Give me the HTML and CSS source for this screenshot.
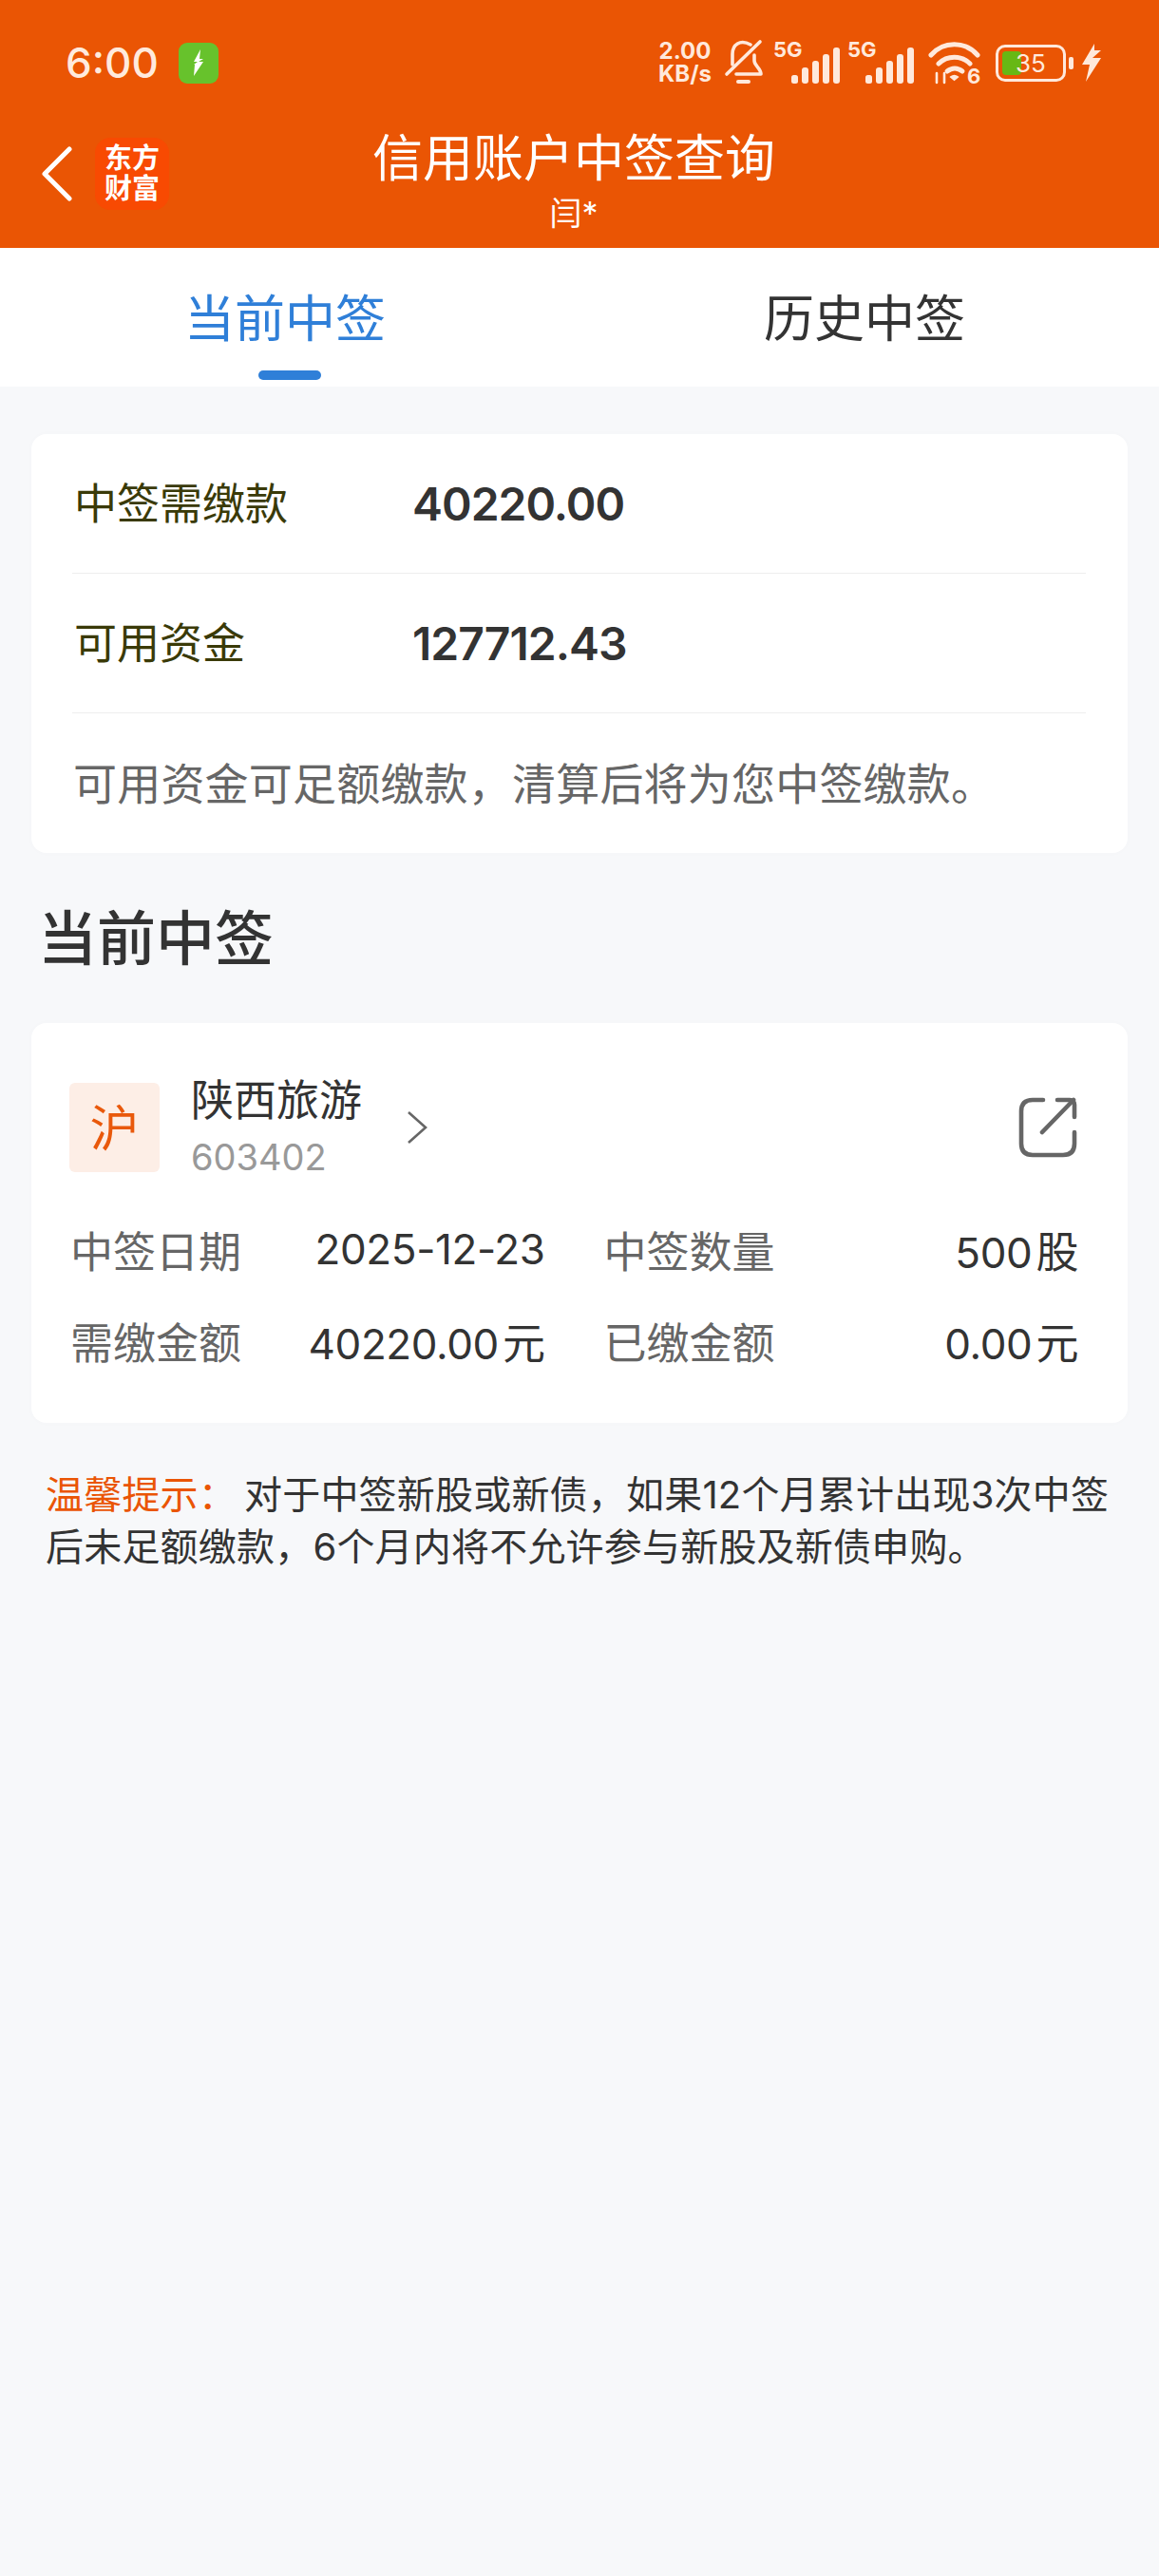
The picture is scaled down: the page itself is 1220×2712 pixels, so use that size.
FILE: index.html
```html
<!DOCTYPE html>
<html lang="zh-CN">
<head>
  <meta charset="UTF-8" />
  <title>信用账户中签查询</title>
  <meta name="viewport" content="width=device-width, initial-scale=1.0" />
  <link rel="stylesheet" href="styles.css">
</head>
<body>
  <header class="top">
    <div class="status-bar">
      <span class="time">6:00</span>
      <span class="charge-badge">
        <svg width="16" height="28" viewBox="0 0 16 28"><path d="M10 0 3 13h4l-4 3 1 0-1 12 10-15H8l5-3H9z" fill="#fff"/></svg>
      </span>
      <span class="status-right">
        <span class="speed"><b>2.00</b><b>KB/s</b></span>
        <svg class="ic-bell" width="42" height="50" viewBox="0 0 42 50" fill="none" stroke="#ffe9dc" stroke-width="3.6" stroke-linecap="round" stroke-linejoin="round">
          <path d="M3 37 38 3"/>
          <path d="M28 6C17 0 9 6 9 16v11"/>
          <path d="M32 17v6c0 5 7 8 7 14H13"/>
          <path d="M15 45h11" stroke-width="4"/>
        </svg>
        <span class="sim">
          <span class="sim-tag">5G</span>
          <svg width="52" height="38" viewBox="0 0 52 38" fill="#ffe9dc">
            <rect x="0" y="29" width="7" height="9" rx="2.5"/>
            <rect x="11" y="21" width="7" height="17" rx="3"/>
            <rect x="22" y="14" width="7" height="24" rx="3"/>
            <rect x="33" y="7" width="7" height="31" rx="3"/>
            <rect x="44" y="0" width="7" height="38" rx="3"/>
          </svg>
        </span>
        <span class="sim">
          <span class="sim-tag">5G</span>
          <svg width="52" height="38" viewBox="0 0 52 38" fill="#ffe9dc">
            <rect x="0" y="29" width="7" height="9" rx="2.5"/>
            <rect x="11" y="21" width="7" height="17" rx="3"/>
            <rect x="22" y="14" width="7" height="24" rx="3"/>
            <rect x="33" y="7" width="7" height="31" rx="3"/>
            <rect x="44" y="0" width="7" height="38" rx="3"/>
          </svg>
        </span>
        <svg class="ic-wifi" width="60" height="54" viewBox="0 0 60 54" fill="none" stroke="#ffe9dc" stroke-width="5" stroke-linecap="round">
          <path d="M3 15C16 0 39 0 52 15"/>
          <path d="M11 24c9-9 24-9 33 0"/>
          <path d="M20 32c5-4 11-4 16 0"/>
          <path d="M24 38c2-1.500 5-1.500 7 0l-3.500 3z" fill="#ffe9dc" stroke-width="2"/>
          <path d="M9 34v10M17 34v10" stroke-width="2.600"/>
          <text x="41" y="45" class="wifi-six">6</text>
        </svg>
        <span class="battery">
          <span class="battery-body">
            <span class="battery-fill"></span>
            <span class="battery-num">35</span>
          </span>
          <span class="battery-nub"></span>
        </span>
        <svg class="ic-bolt" width="22" height="40" viewBox="0 0 22 40"><path d="M14 0 1 22h8L5 40l16-25h-9l9-8h-7z" fill="#ffe9dc"/></svg>
      </span>
    </div>
    <div class="nav">
      <div class="nav-left">
        <svg class="back" width="34" height="58" viewBox="0 0 34 58" fill="none" stroke="#fff" stroke-width="5" stroke-linecap="round" stroke-linejoin="round"><path d="M30 3 4 29l26 26"/></svg>
        <span class="logo"><span>东方</span><span>财富</span></span>
      </div>
      <div class="nav-title">
        <div class="title">信用账户中签查询</div>
        <div class="subtitle">闫*</div>
      </div>
      <div></div>
    </div>
  </header>

  <nav class="tabs">
    <div class="tab active">
      <span class="tab-text">当前中签</span>
      <i class="tab-line"></i>
    </div>
    <div class="tab">
      <span class="tab-text">历史中签</span>
      <i class="tab-line"></i>
    </div>
  </nav>

  <main class="content">
    <section class="card summary">
      <div class="sum-row">
        <span class="sum-label">中签需缴款</span>
        <span class="sum-value">40220.00</span>
      </div>
      <div class="sum-row">
        <span class="sum-label">可用资金</span>
        <span class="sum-value">127712.43</span>
      </div>
      <div class="sum-row sum-tip">可用资金可足额缴款，清算后将为您中签缴款。</div>
    </section>

    <h2 class="section-title">当前中签</h2>

    <section class="card stock">
      <div class="stock-head">
        <span class="market">沪</span>
        <div class="stock-name">
          <div class="name">陕西旅游</div>
          <div class="code">603402</div>
        </div>
        <svg class="chevron" width="22" height="36" viewBox="0 0 22 36" fill="none" stroke="#666" stroke-width="2.600"><path d="M2 2l18 16L2 34"/></svg>
        <svg class="open-link" width="62" height="64" viewBox="0 0 62 64" fill="none" stroke="#666" stroke-width="4.600" stroke-linecap="round" stroke-linejoin="round">
          <path d="M26 3H15C7 3 3 7 3 15v34c0 8 4 12 12 12h32c8 0 12-4 12-12V37"/>
          <path d="M25 37 58 3"/>
          <path d="M41 3h13c3 0 5 2 5 5v13"/>
        </svg>
      </div>
      <div class="stock-grid">
        <div class="pair"><span class="pair-label">中签日期</span><span class="pair-value">2025-12-23</span></div>
        <div class="pair"><span class="pair-label">中签数量</span><span class="pair-value">500<span class="unit">股</span></span></div>
        <div class="pair"><span class="pair-label">需缴金额</span><span class="pair-value">40220.00<span class="unit">元</span></span></div>
        <div class="pair"><span class="pair-label">已缴金额</span><span class="pair-value">0.00<span class="unit">元</span></span></div>
      </div>
    </section>

    <p class="notice"><span class="notice-head">温馨提示：</span>对于中签新股或新债，如果12个月累计出现3次中签后未足额缴款，6个月内将不允许参与新股及新债申购。</p>
  </main>
</body>
</html>
```

FILE: styles.css
```css
* {
  box-sizing: border-box;
}

body {
  margin: 0;
  min-height: 100vh;
  background: #f7f8fa;
  color: #333;
  font-family: Inter, "Noto Sans CJK SC", sans-serif;
}

.top {
  height: 261px;
  background: #ea5504;
  color: #fff;
}

.status-bar {
  display: flex;
  align-items: center;
  height: 132px;
  padding: 0 60px 0 69px;
}

.time {
  font-size: 44px;
  font-weight: 500;
  color: #ffeadd;
}

.charge-badge {
  display: flex;
  align-items: center;
  justify-content: center;
  width: 42px;
  height: 43px;
  margin-left: 21px;
  background: #67c22c;
  border-radius: 9px;
}

.status-right {
  display: flex;
  align-items: center;
  margin-left: auto;
  color: #ffe9dc;
}

.speed {
  display: flex;
  flex-direction: column;
  align-items: center;
  width: 58px;
  font-size: 24px;
  line-height: 24px;
}

.speed b {
  font-weight: 700;
}

.ic-bell {
  margin: 0 3px 0 12px;
}

.sim {
  display: flex;
  align-items: flex-end;
  justify-content: flex-end;
  position: relative;
  width: 70px;
  height: 44px;
  margin-left: 8px;
}

.sim-tag {
  position: absolute;
  left: -1px;
  top: -4px;
  font-size: 22px;
  line-height: 24px;
  font-weight: 700;
}

.ic-wifi {
  margin: 0 -4px 0 14px;
  transform: translateY(4px);
}

.wifi-six {
  font: 700 22px Inter, sans-serif;
  fill: #ffe9dc;
  stroke: none;
}

.battery {
  display: flex;
  align-items: center;
  margin-left: 15px;
}

.battery-body {
  display: flex;
  align-items: center;
  position: relative;
  width: 74px;
  height: 39px;
  padding: 4px;
  border: 3px solid #ffe9dc;
  border-radius: 10px;
}

.battery-fill {
  width: 20px;
  height: 100%;
  background: #67b814;
  border-radius: 4px;
}

.battery-num {
  position: absolute;
  left: 18px;
  top: 2px;
  font-size: 26px;
  line-height: 29px;
  color: #ffe9dc;
}

.battery-nub {
  width: 5px;
  height: 13px;
  margin-left: 3px;
  background: #ffe9dc;
  border-radius: 2px;
}

.ic-bolt {
  margin-left: 8px;
}

.nav {
  display: grid;
  grid-template-columns: 1fr auto 1fr;
  height: 129px;
  padding: 0 55px 0 43px;
}

.nav-left {
  display: flex;
  align-items: center;
  height: 102px;
}

.logo {
  display: flex;
  flex-direction: column;
  align-items: center;
  justify-content: center;
  width: 78px;
  height: 76px;
  margin-left: 23px;
  background: #f84a02;
  border-radius: 16px;
  color: #fff;
  font-size: 29px;
  line-height: 32px;
  font-weight: 700;
}

.nav-title {
  padding-top: 2px;
  text-align: center;
}

.title {
  font-size: 53px;
  line-height: 66px;
}

.subtitle {
  font-size: 34px;
  line-height: 44px;
  margin-top: 3px;
}

.tabs {
  display: flex;
  height: 146px;
  background: #fff;
}

.tab {
  flex: 1;
  display: flex;
  flex-direction: column;
  align-items: center;
  padding-top: 40px;
  font-size: 53px;
  line-height: 66px;
  color: #333;
}

.tab-text {
  margin-top: 2px;
  margin-right: 10px;
}

.tab-line {
  width: 66px;
  height: 10px;
  margin-top: 21px;
  border-radius: 5px;
}

.tab.active {
  color: #2f7fd8;
}

.tab.active .tab-line {
  background: #2f7fd8;
}

.content {
  padding: 50px 33px 0;
}

.card {
  background: #fff;
  border-radius: 16px;
  box-shadow: 0 0 8px rgba(0, 0, 0, 0.015);
}

.summary {
  padding: 0 44px 0 43px;
}

.sum-row {
  display: flex;
  align-items: center;
  height: 147px;
  border-bottom: 1px solid #eeeeee;
}

.sum-row:last-child {
  border-bottom: none;
}

.sum-label {
  width: 358px;
  padding-left: 2px;
  padding-bottom: 6px;
  font-size: 45px;
  color: #3a3a08;
}

.sum-value {
  font-size: 48px;
  font-weight: 600;
  letter-spacing: -1px;
  color: #333;
}

.sum-tip {
  padding-left: 1px;
  padding-bottom: 6px;
  font-size: 46px;
  letter-spacing: 0.2px;
  color: #666;
}

.section-title {
  margin: 56px 0 0 7px;
  font-size: 62px;
  line-height: 70px;
  font-weight: 500;
  color: #333;
}

.stock {
  margin-top: 53px;
  height: 421px;
  padding: 56px 52px 0 40px;
}

.stock-head {
  display: flex;
  align-items: center;
}

.market {
  display: flex;
  align-items: center;
  justify-content: center;
  width: 95px;
  height: 94px;
  padding-bottom: 5px;
  background: #fdeee6;
  border-radius: 6px;
  color: #e9590c;
  font-size: 52px;
}

.stock-name {
  margin-left: 33px;
  padding-top: 2px;
}

.name {
  font-size: 45px;
  line-height: 48px;
  color: #333;
}

.code {
  margin-top: 12px;
  font-size: 38px;
  line-height: 46px;
  color: #999;
}

.chevron {
  margin-left: 47px;
}

.open-link {
  margin-left: auto;
  margin-right: 1px;
}

.stock-grid {
  display: grid;
  grid-template-columns: 1fr 1fr;
  gap: 0 62px;
  margin-top: 26px;
  padding-left: 1px;
}

.pair {
  display: flex;
  align-items: center;
  justify-content: space-between;
  height: 96px;
}

.pair-label {
  font-size: 45px;
  color: #666;
}

.pair-value {
  font-size: 44px;
  letter-spacing: -0.4px;
  color: #333;
}

.unit {
  margin-left: 4px;
  font-size: 45px;
}

.notice {
  margin: 48px 0 0 15px;
  font-size: 40px;
  line-height: 55px;
  letter-spacing: 0.2px;
  color: #333;
}

.notice-head {
  color: #ea5504;
  margin-right: 8px;
}
```
